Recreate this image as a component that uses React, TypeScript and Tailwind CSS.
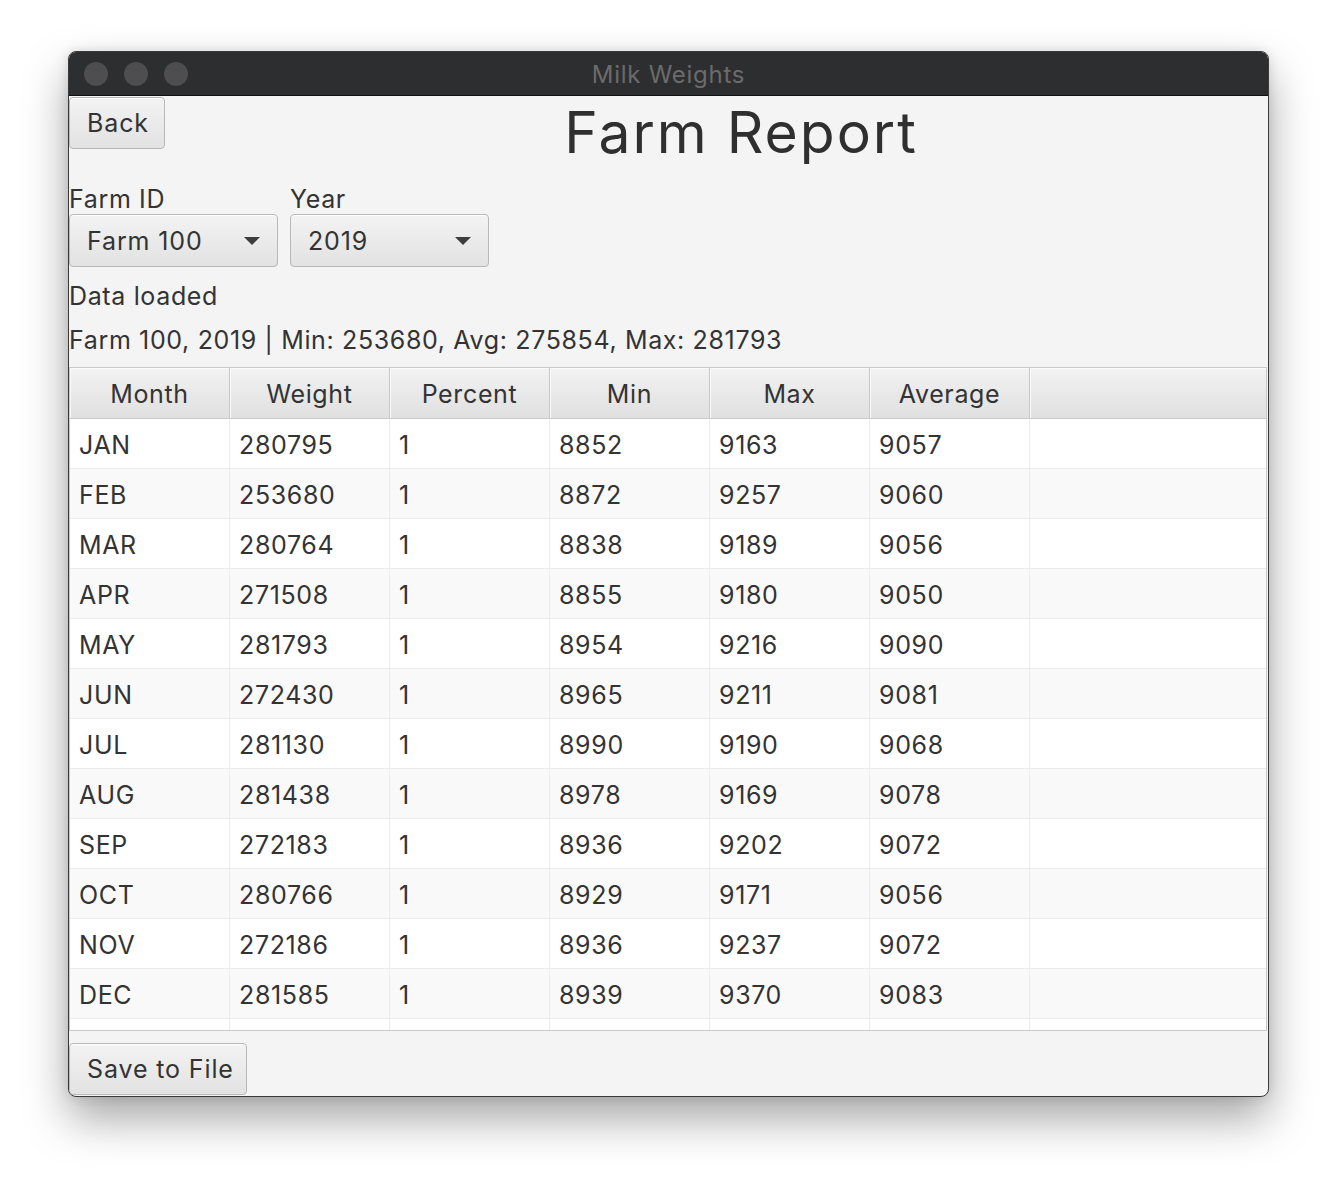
import React from 'react';

const rows: string[][] = [
  ['JAN', '280795', '1', '8852', '9163', '9057'],
  ['FEB', '253680', '1', '8872', '9257', '9060'],
  ['MAR', '280764', '1', '8838', '9189', '9056'],
  ['APR', '271508', '1', '8855', '9180', '9050'],
  ['MAY', '281793', '1', '8954', '9216', '9090'],
  ['JUN', '272430', '1', '8965', '9211', '9081'],
  ['JUL', '281130', '1', '8990', '9190', '9068'],
  ['AUG', '281438', '1', '8978', '9169', '9078'],
  ['SEP', '272183', '1', '8936', '9202', '9072'],
  ['OCT', '280766', '1', '8929', '9171', '9056'],
  ['NOV', '272186', '1', '8936', '9237', '9072'],
  ['DEC', '281585', '1', '8939', '9370', '9083'],
  ['', '', '', '', '', ''],
];

const headers = ['Month', 'Weight', 'Percent', 'Min', 'Max', 'Average'];

const FxButton = ({ label, width }: { label: string; width: string }) => (
  <button
    className={`${width} h-[52px] rounded-[4px] border border-[#b8b8b8] bg-gradient-to-b from-[#f3f3f3] to-[#e2e2e2] text-left pl-[17px] pt-[2px] text-[25px] tracking-[0.035em] text-[#333] shadow-[inset_0_1px_0_#fff]`}
  >
    {label}
  </button>
);

const Combo = ({ value, width }: { value: string; width: string }) => (
  <div
    className={`${width} h-[53px] rounded-[4px] border border-[#b8b8b8] bg-gradient-to-b from-[#f3f3f3] to-[#e2e2e2] shadow-[inset_0_1px_0_#fff] flex items-center justify-between pl-[17px] pr-[17px]`}
  >
    <span className="text-[25px] tracking-[0.035em] text-[#333] pt-[2px]">{value}</span>
    <svg width="16" height="8" viewBox="0 0 16 8">
      <path d="M0 0 L16 0 L8 8 Z" fill="#3d3d3d" />
    </svg>
  </div>
);

export default function App() {
  return (
    <div className="min-h-[1180px] bg-white pt-[51px] pl-[68px]" style={{ fontFamily: 'Inter, "Noto Sans", sans-serif' }}>
      <div className="w-[1201px] h-[1046px] rounded-[8px] border border-[#3a3a3a] overflow-hidden flex flex-col bg-[#f4f4f4] shadow-[0_22px_45px_rgba(0,0,0,0.35),0_0_12px_rgba(0,0,0,0.12)]">
        {/* title bar */}
        <div className="h-[44px] shrink-0 bg-[#2d2e30] border-b border-[#111] relative flex items-center justify-center">
          <div className="absolute left-[15px] top-[10px] flex gap-[16px]">
            <div className="w-[24px] h-[24px] rounded-full bg-[#4e4e50]" />
            <div className="w-[24px] h-[24px] rounded-full bg-[#4e4e50]" />
            <div className="w-[24px] h-[24px] rounded-full bg-[#4e4e50]" />
          </div>
          <span className="text-[24px] tracking-[0.03em] pt-[3px] text-[#6b6b6b]">Milk Weights</span>
        </div>

        {/* content */}
        <div className="flex-1 flex flex-col text-[#333] tracking-[0.04em]">
          <div className="h-[88px] shrink-0 flex pt-[1px]">
            <FxButton label="Back" width="w-[96px]" />
            <div className="flex-1 text-center pl-[49px] pt-[2px] text-[57px] leading-[68px] tracking-[0.035em] text-[#2f2f2f]">Farm Report</div>
          </div>

          <div className="flex gap-[12px]">
            <div className="flex flex-col">
              <span className="text-[25px] leading-[30px]">Farm ID</span>
              <Combo value="Farm 100" width="w-[209px]" />
            </div>
            <div className="flex flex-col">
              <span className="text-[25px] leading-[30px]">Year</span>
              <Combo value="2019" width="w-[199px]" />
            </div>
          </div>

          <div className="mt-[14px] text-[25px] leading-[30px]">Data loaded</div>
          <div className="mt-[14px] text-[25px] leading-[30px]">Farm 100, 2019 | Min: 253680, Avg: 275854, Max: 281793</div>

          {/* table */}
          <div className="mt-[12px] h-[664px] shrink-0 border border-[#c8c8c8] mr-[1px] flex flex-col overflow-hidden bg-white">
            <div className="h-[51px] shrink-0 flex border-b border-[#c8c8c8] bg-gradient-to-b from-[#f2f2f2] to-[#e0e0e0]">
              {headers.map((h) => (
                <div
                  key={h}
                  className="w-[160px] shrink-0 border-r border-[#c8c8c8] shadow-[inset_1px_1px_0_#fafafa] flex items-center justify-center pt-[3px] text-[25px] text-[#333]"
                >
                  {h}
                </div>
              ))}
              <div className="flex-1 shadow-[inset_1px_1px_0_#fafafa]" />
            </div>
            <div className="flex-1 overflow-hidden">
              {rows.map((r, i) => (
                <div
                  key={i}
                  className={`h-[50px] flex border-b border-[#ececec] ${i % 2 === 0 ? 'bg-white' : 'bg-[#f9f9f9]'}`}
                >
                  {r.map((c, j) => (
                    <div key={j} className="w-[160px] shrink-0 border-r border-[#ececec] pl-[9px] pt-[4px] flex items-center text-[25px] text-[#333]">
                      {c}
                    </div>
                  ))}
                  <div className="flex-1" />
                </div>
              ))}
            </div>
          </div>

          <div className="pt-[12px]">
            <FxButton label="Save to File" width="w-[178px]" />
          </div>
        </div>
      </div>
    </div>
  );
}
